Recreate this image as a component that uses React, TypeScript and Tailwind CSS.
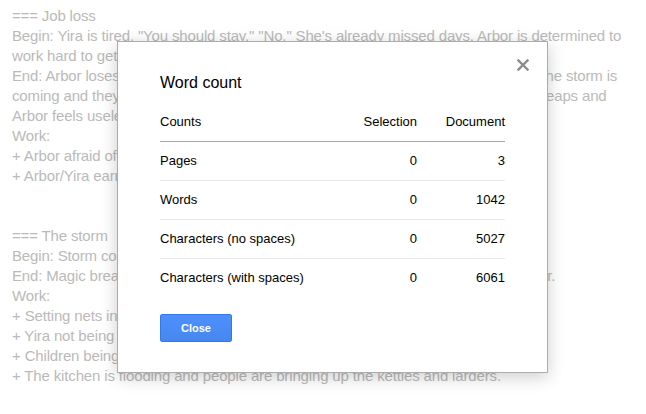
const docLines = [
  "=== Job loss",
  'Begin: Yira is tired. "You should stay." "No." She\'s already missed days. Arbor is determined to',
  "work hard to get her job back before the season turns.",
  "End: Arbor loses her job, and Yira is furious with herself for not listening to Arbor. The storm is",
  "coming and they need every hand they could get, but the work keeps piling up in heaps and",
  "Arbor feels useless.",
  "Work:",
  "+ Arbor afraid of the sea",
  "+ Arbor/Yira earning money",
  "",
  "",
  "=== The storm",
  "Begin: Storm comes in over the bay",
  "End: Magic breaks the storms and the whole village is saved, but Yira is left weaker.",
  "Work:",
  "+ Setting nets in the harbour",
  "+ Yira not being able to help",
  "+ Children being sent up the hill",
  "+ The kitchen is flooding and people are bringing up the kettles and larders.",
];

const counts = [
  { label: "Pages", selection: 0, document: 3 },
  { label: "Words", selection: 0, document: 1042 },
  { label: "Characters (no spaces)", selection: 0, document: 5027 },
  { label: "Characters (with spaces)", selection: 0, document: 6061 },
];

function CloseIcon() {
  return (
    <svg width="12" height="12" viewBox="0 0 12 12" className="block">
      <path d="M1.5 1.5 L10.5 10.5 M10.5 1.5 L1.5 10.5" stroke="#8c8c8c" strokeWidth="2.4" strokeLinecap="square" />
    </svg>
  );
}

function WordCountDialog() {
  return (
    <div className="absolute left-[117px] top-[41px] w-[431px] border border-[#acacac] bg-white px-[42px] py-[30px] shadow-[0_4px_16px_rgba(0,0,0,0.2)]">
      <button type="button" className="absolute right-[18px] top-[17px] p-0">
        <CloseIcon />
      </button>
      <div className="h-[22px] text-[16px] leading-[22px] text-black">Word count</div>
      <div className="mt-[8px] text-[13px] text-black">
        <div className="flex h-[40px] items-center border-b border-[#a8a8a8]">
          <div className="flex-1">Counts</div>
          <div className="w-[100px] text-right">Selection</div>
          <div className="w-[88px] text-right">Document</div>
        </div>
        {counts.map((row, i) => (
          <div
            key={row.label}
            className={`flex items-center ${i < counts.length - 1 ? "h-[39px] border-b border-[#e8e8e8]" : "h-[38px]"}`}
          >
            <div className="flex-1">{row.label}</div>
            <div className="w-[100px] text-right">{row.selection}</div>
            <div className="w-[88px] text-right">{row.document}</div>
          </div>
        ))}
      </div>
      <button
        type="button"
        className="mt-[17px] h-[28px] w-[72px] rounded-[2px] border border-[#3079ed] bg-gradient-to-b from-[#4d90fe] to-[#4787ed] text-[11px] font-bold text-white"
      >
        Close
      </button>
    </div>
  );
}

export default function App() {
  return (
    <div className="relative h-[414px] w-[646px] overflow-hidden bg-white font-['Liberation_Sans',Arial,sans-serif]">
      <div className="px-[12px] pt-[6px] text-[15px] leading-[20px] tracking-[-0.15px] text-[#bababa]">
        {docLines.map((line, i) => (
          <div key={i} className="h-[20px] whitespace-nowrap">
            {line}
          </div>
        ))}
      </div>
      <WordCountDialog />
    </div>
  );
}
